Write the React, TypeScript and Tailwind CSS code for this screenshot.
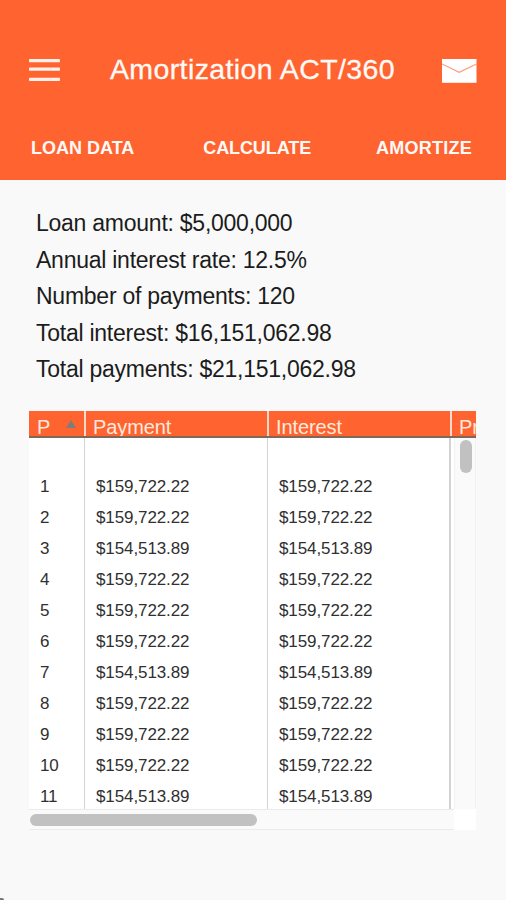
const summary = [
  "Loan amount: $5,000,000",
  "Annual interest rate: 12.5%",
  "Number of payments: 120",
  "Total interest: $16,151,062.98",
  "Total payments: $21,151,062.98",
]

const amounts = [
  "$159,722.22",
  "$159,722.22",
  "$154,513.89",
  "$159,722.22",
  "$159,722.22",
  "$159,722.22",
  "$154,513.89",
  "$159,722.22",
  "$159,722.22",
  "$159,722.22",
  "$154,513.89",
]

const payments = amounts.map((amount, i) => ({ period: i + 1, payment: amount, interest: amount }))

function Header() {
  return (
    <header className="h-[180px] bg-[#ff6430] text-[#fffaf7]">
      <div className="flex h-[118px] items-start justify-between pl-[29px] pr-[29px] pt-[53px]">
        <button aria-label="Menu" className="mt-[5px]">
          <svg width="32" height="24" viewBox="0 0 32 24" fill="#fff1ea">
            <rect x="0" y="0.9" width="31" height="3.4" rx="0.8" />
            <rect x="0" y="9.4" width="31" height="3.4" rx="0.8" />
            <rect x="0" y="19.7" width="31" height="3.4" rx="0.8" />
          </svg>
        </button>
        <h1 className="pl-[2px] text-[28.5px] leading-[32px] tracking-[0.4px] whitespace-nowrap [-webkit-text-stroke:0.3px]">
          Amortization ACT/360
        </h1>
        <button aria-label="Email" className="mt-[6px]">
          <svg width="35" height="24" viewBox="0 0 35 24">
            <rect x="0" y="0" width="34.5" height="23.8" fill="#ffffff" />
            <path d="M0 5 L17.2 13.3 L34.5 5" fill="none" stroke="#ff9a78" strokeWidth="1.1" />
          </svg>
        </button>
      </div>
      <nav className="flex justify-between pl-[31px] pr-[34px] pt-[18px] text-[18px] leading-6 font-bold">
        <button>LOAN DATA</button>
        <button className="pl-[4px] tracking-[-0.1px]">CALCULATE</button>
        <button className="tracking-[0.25px]">AMORTIZE</button>
      </nav>
    </header>
  )
}

function TableHead() {
  return (
    <div className="flex h-[27px] w-[447px] overflow-hidden border-b-2 border-[#806858] bg-[#ff6430] text-[20px] leading-[32px] tracking-[-0.1px] text-[#ffe9df]">
      <div className="flex w-[57px] shrink-0 justify-between border-r-2 border-[#f6d9cd] pl-[8px] pr-[8px]">
        P
        <svg className="mt-[9px] shrink-0" width="10" height="8" viewBox="0 0 10 8" fill="#7d7d7b">
          <path d="M5 0 L10 8 L0 8 Z" />
        </svg>
      </div>
      <div className="w-[183px] shrink-0 border-r-2 border-[#f6d9cd] pl-[7px]">Payment</div>
      <div className="w-[183px] shrink-0 border-r-2 border-[#f6d9cd] pl-[7px]">Interest</div>
      <div className="shrink-0 pl-[7px]">Principal</div>
    </div>
  )
}

export default function App() {
  return (
    <div className="h-[900px] w-[506px] overflow-hidden bg-[#f9f9f9] font-['Liberation_Sans',Arial,sans-serif]">
      <Header />
      <div className="h-[231px] pl-[36px] pt-[25px] text-[23px] leading-[36.6px] tracking-[-0.25px] text-[#1c1c1c]">
        {summary.map((line) => (
          <p key={line}>{line}</p>
        ))}
      </div>
      <div className="ml-[29px] w-[447px]">
        <TableHead />
        <div className="flex h-[371px]">
          <div className="grid w-[425px] grid-cols-[56px_183px_186px] bg-white text-[17px] leading-[31px] tracking-[-0.1px] text-[#303030]">
            <div className="border-r border-[#d4d4d4] pl-[11px] pt-[33.2px]">
              {payments.map((p) => (
                <div key={p.period} className="h-[30.95px]">{p.period}</div>
              ))}
            </div>
            <div className="border-r border-[#d4d4d4] pl-[11px] pt-[33.2px]">
              {payments.map((p) => (
                <div key={p.period} className="h-[30.95px]">{p.payment}</div>
              ))}
            </div>
            <div className="mr-[3px] border-r-2 border-[#d4d4d4] pl-[11px] pt-[33.2px]">
              {payments.map((p) => (
                <div key={p.period} className="h-[30.95px]">{p.interest}</div>
              ))}
            </div>
          </div>
          <div className="w-[22px] border-x border-[#f2f2f2] bg-[#fafafa] pl-[5px] pt-[2px]">
            <div className="h-[33px] w-[12px] rounded-full bg-[#c1c1c1]" />
          </div>
        </div>
        <div className="flex h-[21px]">
          <div className="w-[425px] border-y border-[#ebebeb] bg-[#fafafa] pl-px pt-[4px]">
            <div className="h-[12px] w-[227px] rounded-full bg-[#c1c1c1]" />
          </div>
          <div className="w-[22px] bg-white" />
        </div>
      </div>
      <div className="mt-[68px] h-[2px] w-[4px] rounded-tr-full bg-[#777777]" />
    </div>
  )
}
